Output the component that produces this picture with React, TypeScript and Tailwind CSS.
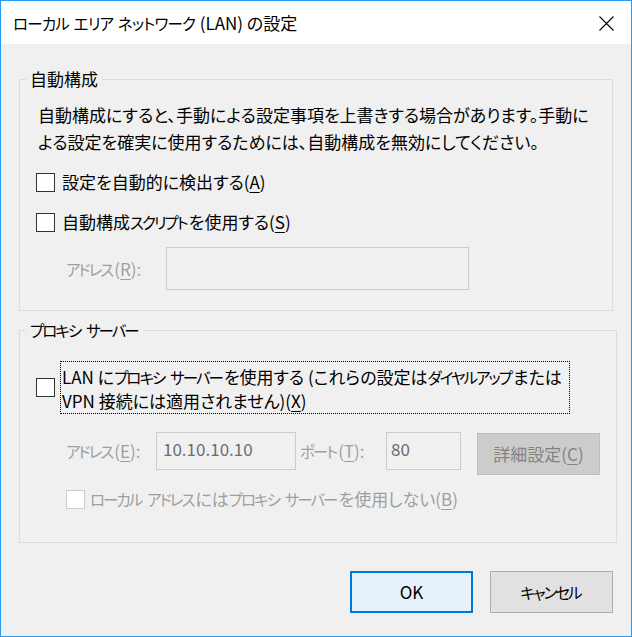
import type { ReactNode } from "react";

const DISABLED_TEXT = "text-[#9f9f9f]";

// Katakana in the system UI font are narrower than Noto's, so set those runs a bit
// smaller and tighter (all but the last glyph, so a following space keeps its width).
function kana(text: string, tight = "tracking-[-2px]"): ReactNode[] {
  return text.split(/([\u30A0-\u30FF]+)/).map((part, i) =>
    /^[\u30A0-\u30FF]+$/.test(part) ? (
      <span key={i} className="text-[15.5px]">
        <span className={tight}>{part.slice(0, -1)}</span>
        {part.slice(-1)}
      </span>
    ) : (
      part
    ),
  );
}

function Key({ children }: { children: ReactNode }) {
  return <span className="underline decoration-1 underline-offset-[3px]">{children}</span>;
}

function CheckBox({ disabled = false }: { disabled?: boolean }) {
  return (
    <span
      className={`block h-[19px] w-[19px] shrink-0 border bg-white ${
        disabled ? "border-[#cccccc]" : "border-[#333333]"
      }`}
    />
  );
}

function GroupBox({ title, className, children }: { title: string; className?: string; children: ReactNode }) {
  return (
    <fieldset className={`border border-[#dcdcdc] px-[16px] ${className ?? ""}`}>
      <legend className="-ml-[10px] px-[4px] text-[17px] leading-[20px]">{kana(title)}</legend>
      {children}
    </fieldset>
  );
}

function TitleBar() {
  return (
    <div className="flex h-[43px] shrink-0 items-center justify-between bg-white pl-[12px] pr-[17px]">
      <span className="text-[17px] leading-[20px] text-black">
        {kana("ローカル エリア ネットワーク (LAN) の設定", "tracking-[-0.8px]")}
      </span>
      <svg width="15" height="15" viewBox="0 0 15 15" className="mt-[1px]">
        <path d="M0.5 0.5 L14.5 14.5 M14.5 0.5 L0.5 14.5" stroke="#000" strokeWidth="1.1" fill="none" />
      </svg>
    </div>
  );
}

export default function App() {
  return (
    <div className="flex h-[637px] w-[632px] flex-col border border-[#2b9af3] bg-[#f0f0f0] font-['Noto_Sans_CJK_JP','Noto_Sans',sans-serif] text-black [font-feature-settings:'palt']">
      <TitleBar />

      <div className="flex flex-col px-[18px] pt-[25px]">
        <GroupBox title="自動構成" className="pb-[20px]">
          <p className="ml-[2px] mt-[12px] whitespace-nowrap text-[17px] leading-[27px]">
            自動構成にすると、手動による設定事項を上書きする場合があります。手動に
            <br />
            よる設定を確実に使用するためには、自動構成を無効にしてください。
          </p>

          <label className="mt-[17px] flex h-[20px] items-center gap-[7px] text-[17px] leading-[20px]">
            <CheckBox />
            <span>
              設定を自動的に検出する(<Key>A</Key>)
            </span>
          </label>

          <label className="mt-[20px] flex h-[20px] items-center gap-[7px] text-[17px] leading-[20px]">
            <CheckBox />
            <span>
              {kana("自動構成スクリプトを使用する")}(<Key>S</Key>)
            </span>
          </label>

          <div className="ml-[30px] mt-[15px] flex items-center">
            <span className={`w-[100px] text-[17px] leading-[20px] ${DISABLED_TEXT}`}>
              {kana("アドレス")}(<Key>R</Key>):
            </span>
            <div className="h-[43px] w-[303px] border border-[#cccccc] bg-[#f0f0f0]" />
          </div>
        </GroupBox>

        <GroupBox title="プロキシ サーバー" className="mt-[9px] pb-[33px]">
          <div className="mt-[21px] flex items-center gap-[5px]">
            <CheckBox />
            <span className="w-[510px] whitespace-nowrap border border-dotted border-black pl-[1px] pt-[3px] text-[17px] leading-[24px]">
              {kana("LAN にプロキシ サーバーを使用する (これらの設定はダイヤルアップまたは")}
              <br />
              VPN 接続には適用されません)(<Key>X</Key>)
            </span>
          </div>

          <div className="ml-[30px] mt-[18px] flex items-start text-[17px]">
            <span className={`flex h-[38px] w-[90px] items-center leading-[20px] ${DISABLED_TEXT}`}>
              <span>
                {kana("アドレス")}(<Key>E</Key>):
              </span>
            </span>
            <div className="h-[38px] w-[140px] border border-[#cccccc] bg-[#f0f0f0] pl-[6px] pt-[5px] leading-[22px] text-[#6d6d6d]">
              10.10.10.10
            </div>
            <span className={`ml-[4px] flex h-[38px] w-[86px] items-center leading-[20px] ${DISABLED_TEXT}`}>
              <span>
                {kana("ポート")}(<Key>T</Key>):
              </span>
            </span>
            <div className="h-[38px] w-[75px] border border-[#cccccc] bg-[#f0f0f0] pl-[4px] pt-[5px] leading-[22px] text-[#6d6d6d]">
              80
            </div>
            <button
              type="button"
              disabled
              className="ml-[16px] mt-[1px] flex h-[42px] w-[123px] items-center justify-center border border-[#bfbfbf] bg-[#cccccc] leading-[20px] text-[#838383]"
            >
              <span>
                詳細設定(<Key>C</Key>)
              </span>
            </button>
          </div>

          <label className={`ml-[30px] mt-[14px] flex h-[20px] items-center gap-[5px] text-[17px] leading-[20px] ${DISABLED_TEXT}`}>
            <CheckBox disabled />
            <span>
              {kana("ローカル アドレスにはプロキシ サーバーを使用しない")}(<Key>B</Key>)
            </span>
          </label>
        </GroupBox>

        <div className="mt-[28px] flex justify-end gap-[17px] text-[17px] leading-[20px]">
          <button
            type="button"
            className="flex h-[42px] w-[123px] items-center justify-center border-2 border-[#0078d7] bg-[#e5f1fb]"
          >
            OK
          </button>
          <button
            type="button"
            className="flex h-[42px] w-[123px] items-center justify-center border border-[#adadad] bg-[#e1e1e1]"
          >
            <span>{kana("キャンセル")}</span>
          </button>
        </div>
      </div>
    </div>
  );
}
